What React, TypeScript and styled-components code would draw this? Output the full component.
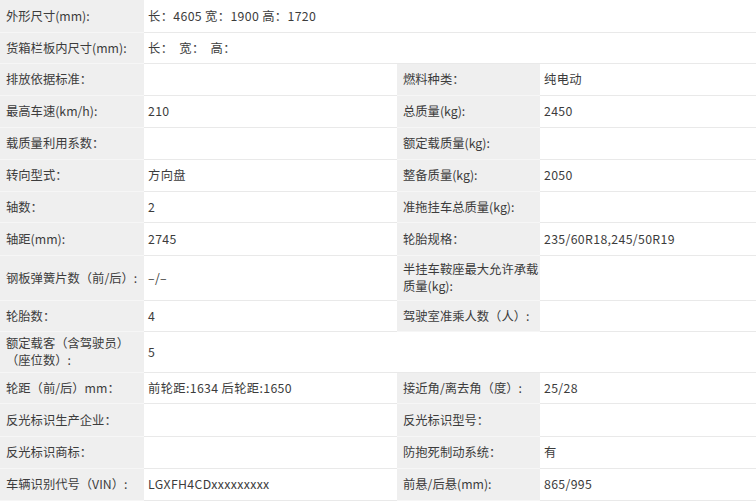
import React from "react";
import styled, { createGlobalStyle } from "styled-components";

const Global = createGlobalStyle`
  html, body { margin: 0; padding: 0; background: #ffffff; }
  body {
    font-family: "Noto Sans CJK SC", "Noto Sans", sans-serif;
    color: #3a3a3a;
  }
`;

const Table = styled.div`
  width: 756px;
  height: 501px;
  overflow: hidden;
  display: flex;
  flex-direction: column;
  font-size: 12.3px;
`;

const Row = styled.div<{ $tall?: number }>`
  display: grid;
  grid-template-columns: 144px 253px 143px 1fr;
  height: ${(p) => p.$tall ?? 32}px;
  flex: none;
`;

const Label = styled.div`
  background: #efefef;
  border-bottom: 1px solid #f6f6f6;
  padding: 0 0 0 6px;
  display: flex;
  align-items: center;
  line-height: 17px;
  color: #3c3c3c;
  white-space: nowrap;
  overflow: visible;
`;

const Value = styled.div<{ $span?: number }>`
  background: #ffffff;
  border-bottom: 1px solid #e9e9e9;
  padding: 0 4px;
  display: flex;
  align-items: center;
  line-height: 17px;
  color: #3c3c3c;
  letter-spacing: 0.35px;
  white-space: nowrap;
  ${(p) => (p.$span ? `grid-column: span ${p.$span};` : "")}
`;

const Gap = styled.span`
  display: inline-block;
  width: 6px;
`;

type Cell = React.ReactNode;
type RowData = { cells: Cell[]; span?: boolean; tall?: number };

const rows: RowData[] = [
  { cells: ["外形尺寸(mm):", "长：4605 宽：1900 高：1720"], span: true, tall: 33 },
  { cells: ["货箱栏板内尺寸(mm):", <>长：<Gap />宽：<Gap />高：</>], span: true, tall: 31 },
  { cells: ["排放依据标准：", "", "燃料种类：", "纯电动"] },
  { cells: ["最高车速(km/h):", "210", "总质量(kg):", "2450"] },
  { cells: ["载质量利用系数：", "", "额定载质量(kg):", ""] },
  { cells: ["转向型式：", "方向盘", "整备质量(kg):", "2050"] },
  { cells: ["轴数：", "2", "准拖挂车总质量(kg):", ""], tall: 31 },
  { cells: ["轴距(mm):", "2745", "轮胎规格：", "235/60R18,245/50R19"], tall: 33 },
  {
    cells: [
      "钢板弹簧片数（前/后）:",
      "–/–",
      <>半挂车鞍座最大允许承载<br />质量(kg):</>,
      "",
    ],
    tall: 45,
  },
  { cells: ["轮胎数：", "4", "驾驶室准乘人数（人）:", ""], tall: 31 },
  { cells: [<>额定载客（含驾驶员）<br />（座位数）:</>, "5"], span: true, tall: 41 },
  { cells: ["轮距（前/后）mm：", "前轮距:1634 后轮距:1650", "接近角/离去角（度）:", "25/28"], tall: 31 },
  { cells: ["反光标识生产企业：", "", "反光标识型号：", ""], tall: 33 },
  { cells: ["反光标识商标：", "", "防抱死制动系统：", "有"] },
  { cells: ["车辆识别代号（VIN）:", "LGXFH4CDxxxxxxxxx", "前悬/后悬(mm):", "865/995"] },
];

export default function App() {
  return (
    <>
      <Global />
      <Table>
        {rows.map((r, i) => (
          <Row key={i} $tall={r.tall}>
            {r.span ? (
              <>
                <Label>{r.cells[0]}</Label>
                <Value $span={3}>{r.cells[1]}</Value>
              </>
            ) : (
              <>
                <Label>{r.cells[0]}</Label>
                <Value>{r.cells[1]}</Value>
                <Label>{r.cells[2]}</Label>
                <Value>{r.cells[3]}</Value>
              </>
            )}
          </Row>
        ))}
      </Table>
    </>
  );
}
